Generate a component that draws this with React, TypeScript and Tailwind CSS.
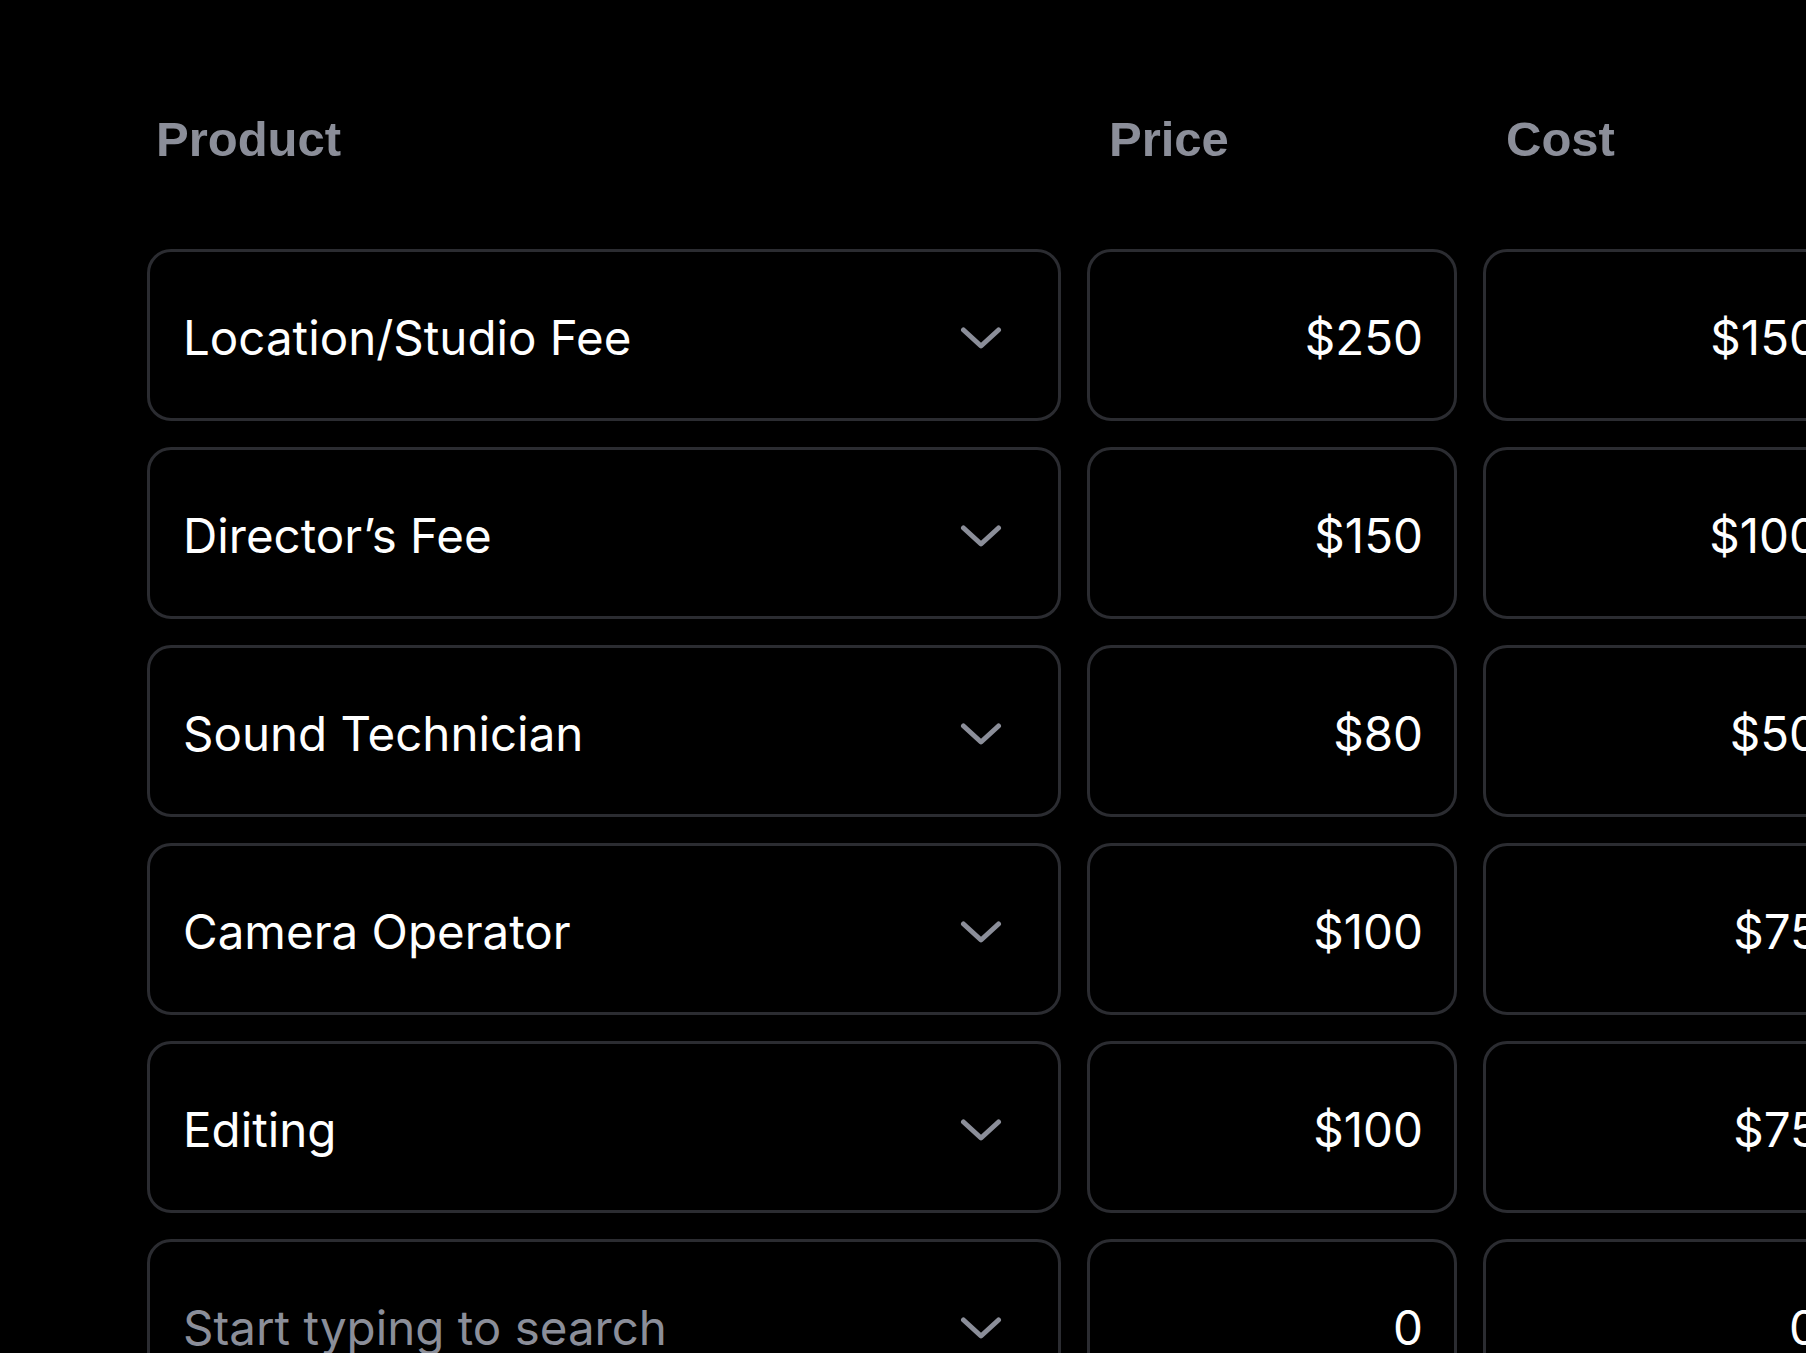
const rows = [
  { product: "Location/Studio Fee", price: "$250", cost: "$150" },
  { product: "Director’s Fee", price: "$150", cost: "$100" },
  { product: "Sound Technician", price: "$80", cost: "$50" },
  { product: "Camera Operator", price: "$100", cost: "$75" },
  { product: "Editing", price: "$100", cost: "$75" },
  { product: "", price: "0", cost: "0" },
]

function Chevron() {
  return (
    <svg width="42" height="24" viewBox="0 0 42 24" fill="none" className="shrink-0 text-[#8b8e99]">
      <path d="M3.5 4 L21 20 L38.5 4" stroke="currentColor" strokeWidth="5" strokeLinecap="round" strokeLinejoin="round" />
    </svg>
  )
}

export default function App() {
  return (
    <div className="h-[1353px] w-[1806px] overflow-hidden bg-black font-['Inter','Noto_Sans',sans-serif]">
      <div className="grid w-max grid-cols-[914px_370px_370px] gap-x-[26px] gap-y-[26px] pl-[147px] pt-[115px]">
        {/* Header */}
        <div className="mb-[60px] h-[48px] pl-[9px] font-['Liberation_Sans',Arial,sans-serif] text-[49px] leading-[48px] font-bold text-[#8b8e99]">
          Product
        </div>
        <div className="mb-[60px] h-[48px] pl-[22px] font-['Liberation_Sans',Arial,sans-serif] text-[49px] leading-[48px] font-bold text-[#8b8e99]">
          Price
        </div>
        <div className="mb-[60px] h-[48px] pl-[23px] font-['Liberation_Sans',Arial,sans-serif] text-[49px] leading-[48px] font-bold text-[#8b8e99]">
          Cost
        </div>

        {/* Rows */}
        {rows.map((r, i) => (
          <div key={i} className="contents">
            <div className="flex h-[172px] items-center justify-between rounded-[24px] border-[3px] border-[#2b2c31] pt-[5px] pr-[56px] pl-[33px]">
              {r.product ? (
                <span className="text-[47.5px] text-white">{r.product}</span>
              ) : (
                <span className="text-[47.5px] text-[#8b8e99]">Start typing to search</span>
              )}
              <Chevron />
            </div>
            <div className="flex h-[172px] items-center justify-end rounded-[24px] border-[3px] border-[#2b2c31] pt-[5px] pr-[31px]">
              <span className="text-[47.5px] text-white">{r.price}</span>
            </div>
            <div className="flex h-[172px] items-center justify-end rounded-[24px] border-[3px] border-[#2b2c31] pt-[5px] pr-[31px]">
              <span className="text-[47.5px] text-white">{r.cost}</span>
            </div>
          </div>
        ))}
      </div>
    </div>
  )
}
